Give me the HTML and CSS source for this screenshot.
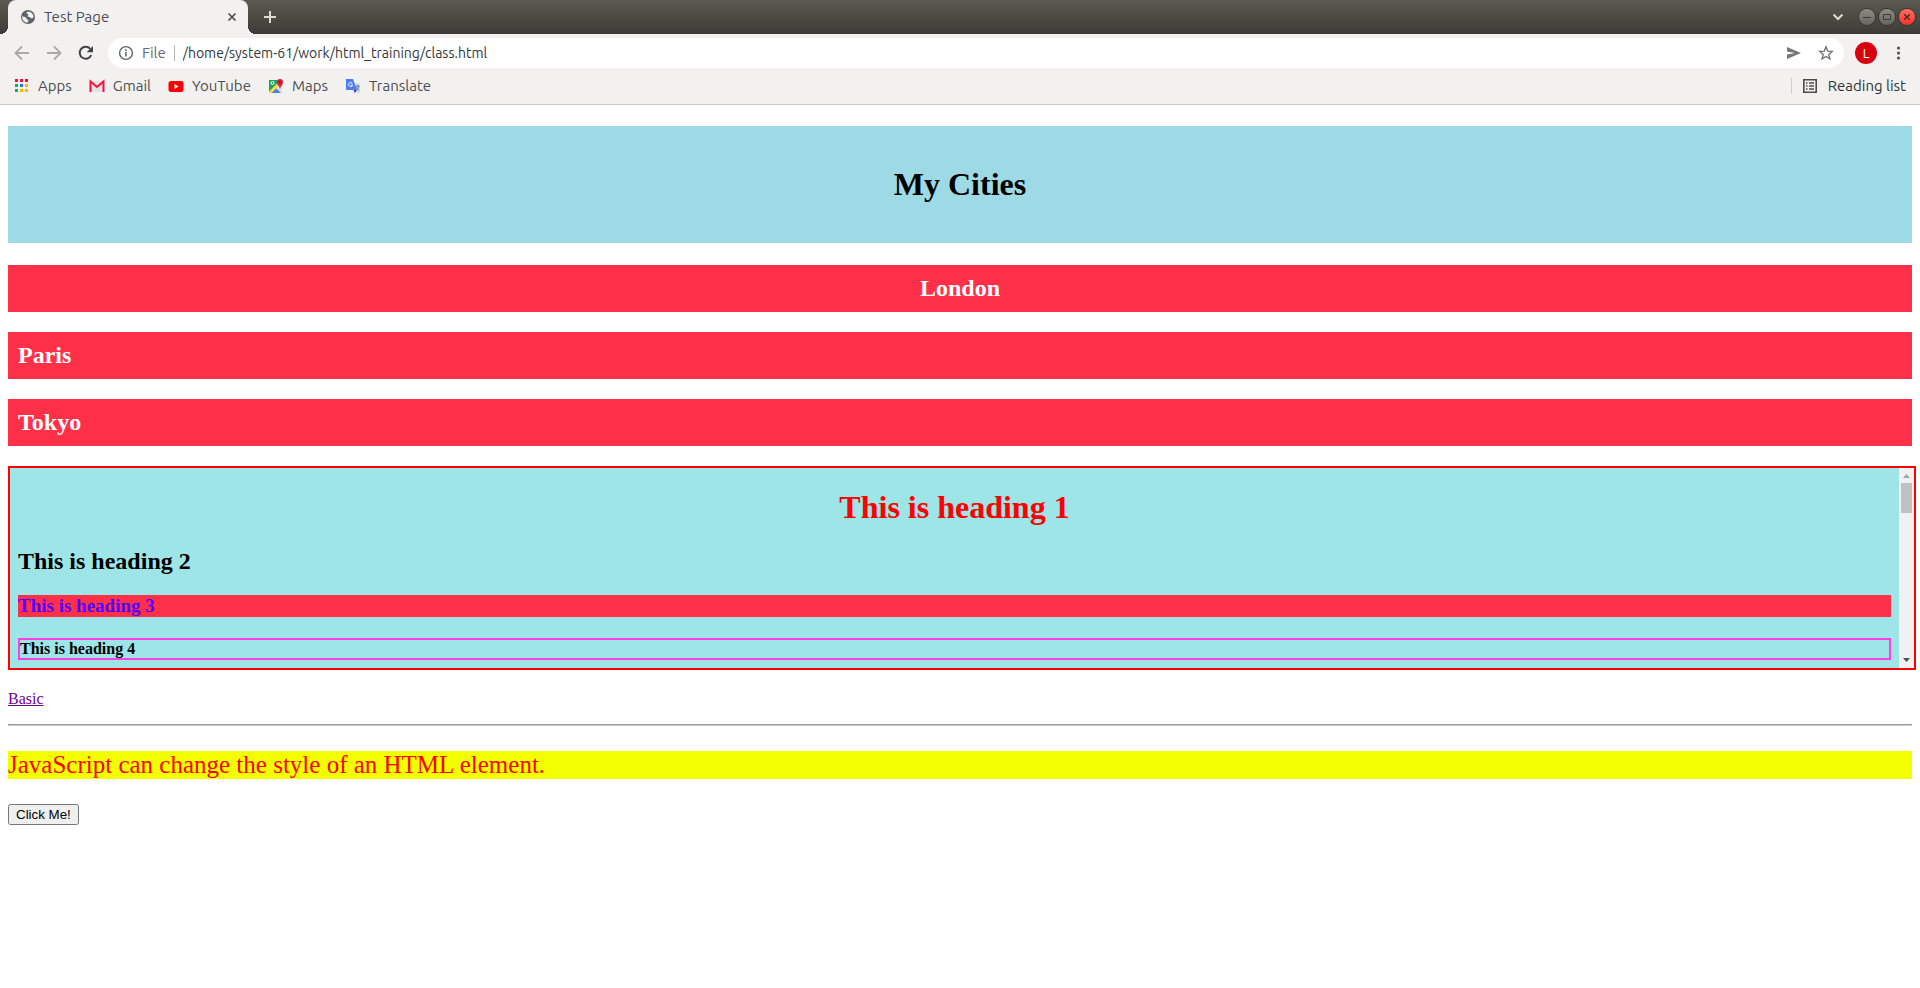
FILE: index.html
```html
<!DOCTYPE html>
<html lang="en">
<head>
<meta charset="utf-8">
<title>Test Page</title>
<link rel="stylesheet" href="styles.css">
</head>
<body>
<header class="browser">
  <div class="titlebar">
    <div class="tab">
      <svg class="icon" viewBox="0 0 16 16"><circle cx="8" cy="8" r="7" fill="#5f6368"/><path d="M2 7.500c1.500 0 3 .2 4 1.200.8.800.5 1.700 1.700 1.900 1 .1.500 1.300.3 2.900a5.600 5.600 0 0 1-6-6zM8 2.500c-1 .8-1.800 1.200-1.500 2 .3.900 1.300.1 1.700 1 .3.800-1 1-.5 1.900.5.800 1.500.2 2.200.8.800.7 1.200 1.300 2.400 1.100.7-.1 1.100-.6 1.300-1.500A5.600 5.600 0 0 0 8 2.500z" fill="#f2f1f0"/></svg>
      <span class="tab-title">Test Page</span>
      <button class="tab-close" aria-label="Close tab"><svg viewBox="0 0 16 16"><path d="M4.500 4.500l7 7M11.500 4.500l-7 7" stroke="#45484b" stroke-width="1.600"/></svg></button>
    </div>
    <button class="new-tab" aria-label="New tab"><svg viewBox="0 0 16 16"><path d="M8 2v12M2 8h12" stroke="#dfdbd2" stroke-width="2"/></svg></button>
    <div class="window-controls">
      <button class="tab-search" aria-label="Search tabs"><svg viewBox="0 0 16 16"><path d="M3.500 5.500L8 10l4.500-4.500" fill="none" stroke="#dfdbd2" stroke-width="2"/></svg></button>
      <button class="win" aria-label="Minimize"><svg viewBox="0 0 16 16"><path d="M4 8.500h8" stroke="#3c3b37"/></svg></button>
      <button class="win" aria-label="Maximize"><svg viewBox="0 0 16 16"><path d="M4.500 5.500h7v5h-7z" fill="none" stroke="#3c3b37"/></svg></button>
      <button class="win win-close" aria-label="Close"><svg viewBox="0 0 16 16"><path d="M5.200 5.200l5.600 5.600M10.800 5.200l-5.600 5.600" stroke="#4b2a1c" stroke-width="1.400"/></svg></button>
    </div>
  </div>
  <div class="toolbar">
    <button class="nav" aria-label="Back"><svg viewBox="0 0 16 16"><path d="M15 8H2M8 1.500L1.500 8 8 14.500" fill="none" stroke="#a9a9a8" stroke-width="1.800"/></svg></button>
    <button class="nav" aria-label="Forward"><svg viewBox="0 0 16 16"><path d="M1 8h13M8 1.500L14.500 8 8 14.500" fill="none" stroke="#a9a9a8" stroke-width="1.800"/></svg></button>
    <button class="nav" aria-label="Reload"><svg viewBox="0 0 16 16"><path d="M13.200 10.200A6 6 0 1 1 12.300 3.800" fill="none" stroke="#414345" stroke-width="2"/><path d="M15 1v6.300H8.700z" fill="#414345"/></svg></button>
    <div class="omnibox">
      <svg class="icon" viewBox="0 0 16 16"><circle cx="8" cy="8" r="6.400" fill="none" stroke="#5f6368" stroke-width="1.400"/><path d="M8 7v4.500M8 4.300v1.600" stroke="#5f6368" stroke-width="1.600"/></svg>
      <label class="scheme" for="address">File</label>
      <input class="address" id="address" type="text" value="/home/system-61/work/html_training/class.html">
      <button class="nav" aria-label="Share"><svg viewBox="0 0 16 16"><path d="M1 2l14 6-14 6V9.500L9 8 1 6.500z" fill="#757575"/></svg></button>
      <button class="nav" aria-label="Bookmark"><svg viewBox="0 0 16 16"><path d="M8 1.800l1.700 4.300 4.600.3-3.500 3 1.100 4.500L8 11.400l-3.900 2.500 1.100-4.500-3.500-3 4.600-.3z" fill="none" stroke="#6e6e6e" stroke-width="1.300"/></svg></button>
    </div>
    <button class="avatar" aria-label="Profile">L</button>
    <button class="nav menu" aria-label="Menu"><svg viewBox="0 0 16 16"><g fill="#505254"><circle cx="8.500" cy="3" r="1.600"/><circle cx="8.500" cy="8" r="1.600"/><circle cx="8.500" cy="13" r="1.600"/></g></svg></button>
  </div>
  <nav class="bookmarks">
    <a class="bookmark" href="#"><svg class="icon" viewBox="0 0 16 16"><path d="M1 1h3v3H1zM6 1h3v3H6zM11 1h3v3h-3z" fill="#f4113a"/><path d="M1 6h3v3H1z" fill="#0caf5b"/><path d="M6 6h3v3H6z" fill="#1877f2"/><path d="M11 6h3v3h-3z" fill="#ffb400"/><path d="M1 11h3v3H1z" fill="#0caf5b"/><path d="M6 11h3v3H6zM11 11h3v3h-3z" fill="#ffb400"/></svg>Apps</a>
    <a class="bookmark" href="#"><svg class="icon" viewBox="0 0 16 16"><path d="M1 3h14v11H1z" fill="#e3e3e3"/><path d="M1.500 14V3.500L8 9l6.500-5.500V14" fill="none" stroke="#f0143a" stroke-width="2"/></svg>Gmail</a>
    <a class="bookmark" href="#"><svg class="icon" viewBox="0 0 16 16"><rect x="0.500" y="3" width="15" height="11" rx="2.500" fill="#f00"/><path d="M6.500 6v5l4-2.500z" fill="#fff"/></svg>YouTube</a>
    <a class="bookmark" href="#"><svg class="icon" viewBox="0 0 16 16"><path d="M1 2h9v13H1z" fill="#1ea362"/><path d="M10 6h4v9H2V14z" fill="#dfe2e6"/><path d="M3 15l5-5 5 5z" fill="#4a80f5"/><path d="M1 13.500l8-8 2 2-7.500 7.500H1z" fill="#ffd83b"/><circle cx="4.500" cy="5" r="1.500" fill="none" stroke="#fff"/><path d="M12 11C11.500 8 9 7 9 4a3 3 0 0 1 6 0c0 3-2.500 4-3 7z" fill="#e8173b"/><circle cx="12" cy="4" r="1" fill="#87102b"/></svg>Maps</a>
    <a class="bookmark" href="#"><svg class="icon" viewBox="0 0 16 16"><path d="M6 5h9v10H9z" fill="#dcdcdc"/><path d="M1 1h7l4 11H2a1 1 0 0 1-1-1z" fill="#4e7cf5"/><path d="M9 12h3l-2.500 3z" fill="#3323c7"/><path d="M7.300 5.400A2 2 0 1 0 7.600 7H6" fill="none" stroke="#fff"/><path d="M10.500 8h4M12.500 7v1M14 8c-.5 2-1.500 3-2.500 4M11.500 9c.5 1.500 1.500 2.500 2.800 3" fill="none" stroke="#607d8b"/></svg>Translate</a>
    <button class="reading-list"><svg class="icon" viewBox="0 0 16 16"><path d="M1.800 1.800h12.400v12.400H1.800z" fill="none" stroke="#4a4c4e" stroke-width="1.600"/><path d="M4 5h1.500M7 5h5M4 8h1.500M7 8h5M4 11h1.500M7 11h5" stroke="#4a4c4e" stroke-width="1.500"/></svg>Reading list</button>
  </nav>
</header>
<main class="page">
  <h1 class="banner">My Cities</h1>
  <h2 class="city city-centered">London</h2>
  <h2 class="city">Paris</h2>
  <h2 class="city">Tokyo</h2>
  <section class="frame">
    <div class="frame-body">
      <h1 class="heading1">This is heading 1</h1>
      <h2 class="heading2">This is heading 2</h2>
      <h3 class="heading3">This is heading 3</h3>
      <h4 class="heading4">This is heading 4</h4>
    </div>
    <div class="scrollbar">
      <svg class="arrow" viewBox="0 0 15 15"><path d="M4 10l3.500-4L11 10z" fill="#a3a3a3"/></svg>
      <div class="thumb"></div>
      <svg class="arrow arrow-down" viewBox="0 0 15 15"><path d="M4 5l3.500 4L11 5z" fill="#505050"/></svg>
    </div>
  </section>
  <p class="link-line"><a class="visited" href="#">Basic</a></p>
  <hr class="rule">
  <p class="demo">JavaScript can change the style of an HTML element.</p>
  <button class="click" type="button">Click Me!</button>
</main>
</body>
</html>
```
FILE: styles.css
```css
* { box-sizing: border-box; }
body { margin: 0; background: #fff; font: 16px "Liberation Serif", serif; color: #000; }

.browser { background: #f2f1f0; border-bottom: 1px solid #c9c8c7; font: 15px/20px Ubuntu, "Noto Sans", sans-serif; color: #4c4e50; }
.browser button { border: 0; padding: 0; background: none; font: inherit; color: inherit; }
.browser svg { display: block; width: 16px; height: 16px; flex: none; }

.titlebar { display: flex; align-items: center; height: 34px; padding: 0 5px 0 8px; background: linear-gradient(#5c5b50, #3c3b37); }
.tab { position: relative; display: flex; align-items: center; gap: 8px; width: 240px; height: 34px; padding: 0 8px 0 12px; background: #f2f1f0; border-radius: 8px 8px 0 0; }
.tab::before, .tab::after { content: ""; position: absolute; bottom: 0; width: 8px; height: 8px; }
.tab::before { right: 100%; background: radial-gradient(circle at 0 0, transparent 8px, #f2f1f0 8px); }
.tab::after { left: 100%; background: radial-gradient(circle at 100% 0, transparent 8px, #f2f1f0 8px); }
.tab-title { flex: 1; }
.new-tab { margin-left: 14px; }
.window-controls { display: flex; align-items: center; gap: 4px; margin-left: auto; }
.tab-search { margin-right: 9px; }
.browser .win { display: grid; place-items: center; width: 16px; height: 16px; border-radius: 50%; background: linear-gradient(#8d8b84, #66655f); box-shadow: 0 0 0 1px #35342f; }
.browser .win-close { background: linear-gradient(#ff7260, #fa2f2c); }

.toolbar { display: flex; align-items: center; gap: 16px; height: 38px; padding: 0 14px; }
.omnibox { display: flex; flex: 1; align-items: center; height: 30px; margin-left: -2px; margin-right: -5px; padding: 0 10px; background: #fff; border-radius: 15px; }
.scheme { margin: 0 8px; padding-right: 8px; border-right: 1px solid #b5b6b7; line-height: 16px; color: #5f6b78; }
.address { flex: 1; min-width: 0; padding: 0; border: 0; background: none; font: inherit; font-size: 14px; color: #333639; }
.omnibox .nav + .nav { margin-left: 16px; }
.browser .avatar { width: 22px; height: 22px; margin-right: -3px; border-radius: 50%; background: #d8000f; color: #fff; font-size: 13px; }

.bookmarks { display: flex; align-items: center; gap: 17px; height: 32px; padding: 0 14px 4px; }
.bookmark { display: flex; align-items: center; gap: 8px; color: inherit; text-decoration: none; }
.browser .reading-list { display: flex; align-items: center; gap: 10px; margin-left: auto; padding-left: 10px; border-left: 1px solid #cfcecd; line-height: 16px; color: #303335; }

.page { padding: 0 8px; }
.banner { margin: 21px 0 22px; padding: 40px; background: #9edae5; font-size: 32px; line-height: 37px; text-align: center; }
.city { margin: 0 0 20px; padding: 10px; background: #ff3048; color: #fff; font-size: 24px; line-height: 27px; }
.city-centered { text-align: center; }
.frame { display: flex; width: calc(100% + 4px); height: 204px; border: 2px solid #f00; background: #9de5e7; }
.frame-body { flex: 1; padding: 0 8px; overflow: hidden; }
.heading1 { margin: 21px 0 22px; color: #f00; font-size: 32px; line-height: 37px; text-align: center; }
.heading2 { margin: 0 0 20px; font-size: 24px; line-height: 27px; }
.heading3 { margin: 0 0 21px; background: #ff3048; color: #5000ff; font-size: 19px; line-height: 22px; }
.heading4 { margin: 0; border: 2px solid #ff3ee8; font-size: 16px; line-height: 18px; }
.scrollbar { display: flex; flex-direction: column; width: 15px; background: #f1f1f1; }
.thumb { height: 30px; margin: 0 2px; background: #c1c1c1; }
.arrow { display: block; width: 15px; height: 15px; }
.arrow-down { margin-top: auto; }
.link-line { margin: 20px 0 16px; line-height: 18px; }
.visited { color: #70009a; }
.rule { margin: 0; border: 1px solid; border-color: #9a9a9a #ccc #ccc #9a9a9a; }
.demo { margin: 25px 0; background: #f3ff00; color: #f00; font-size: 25px; line-height: 28px; }
.click { display: block; }
```
